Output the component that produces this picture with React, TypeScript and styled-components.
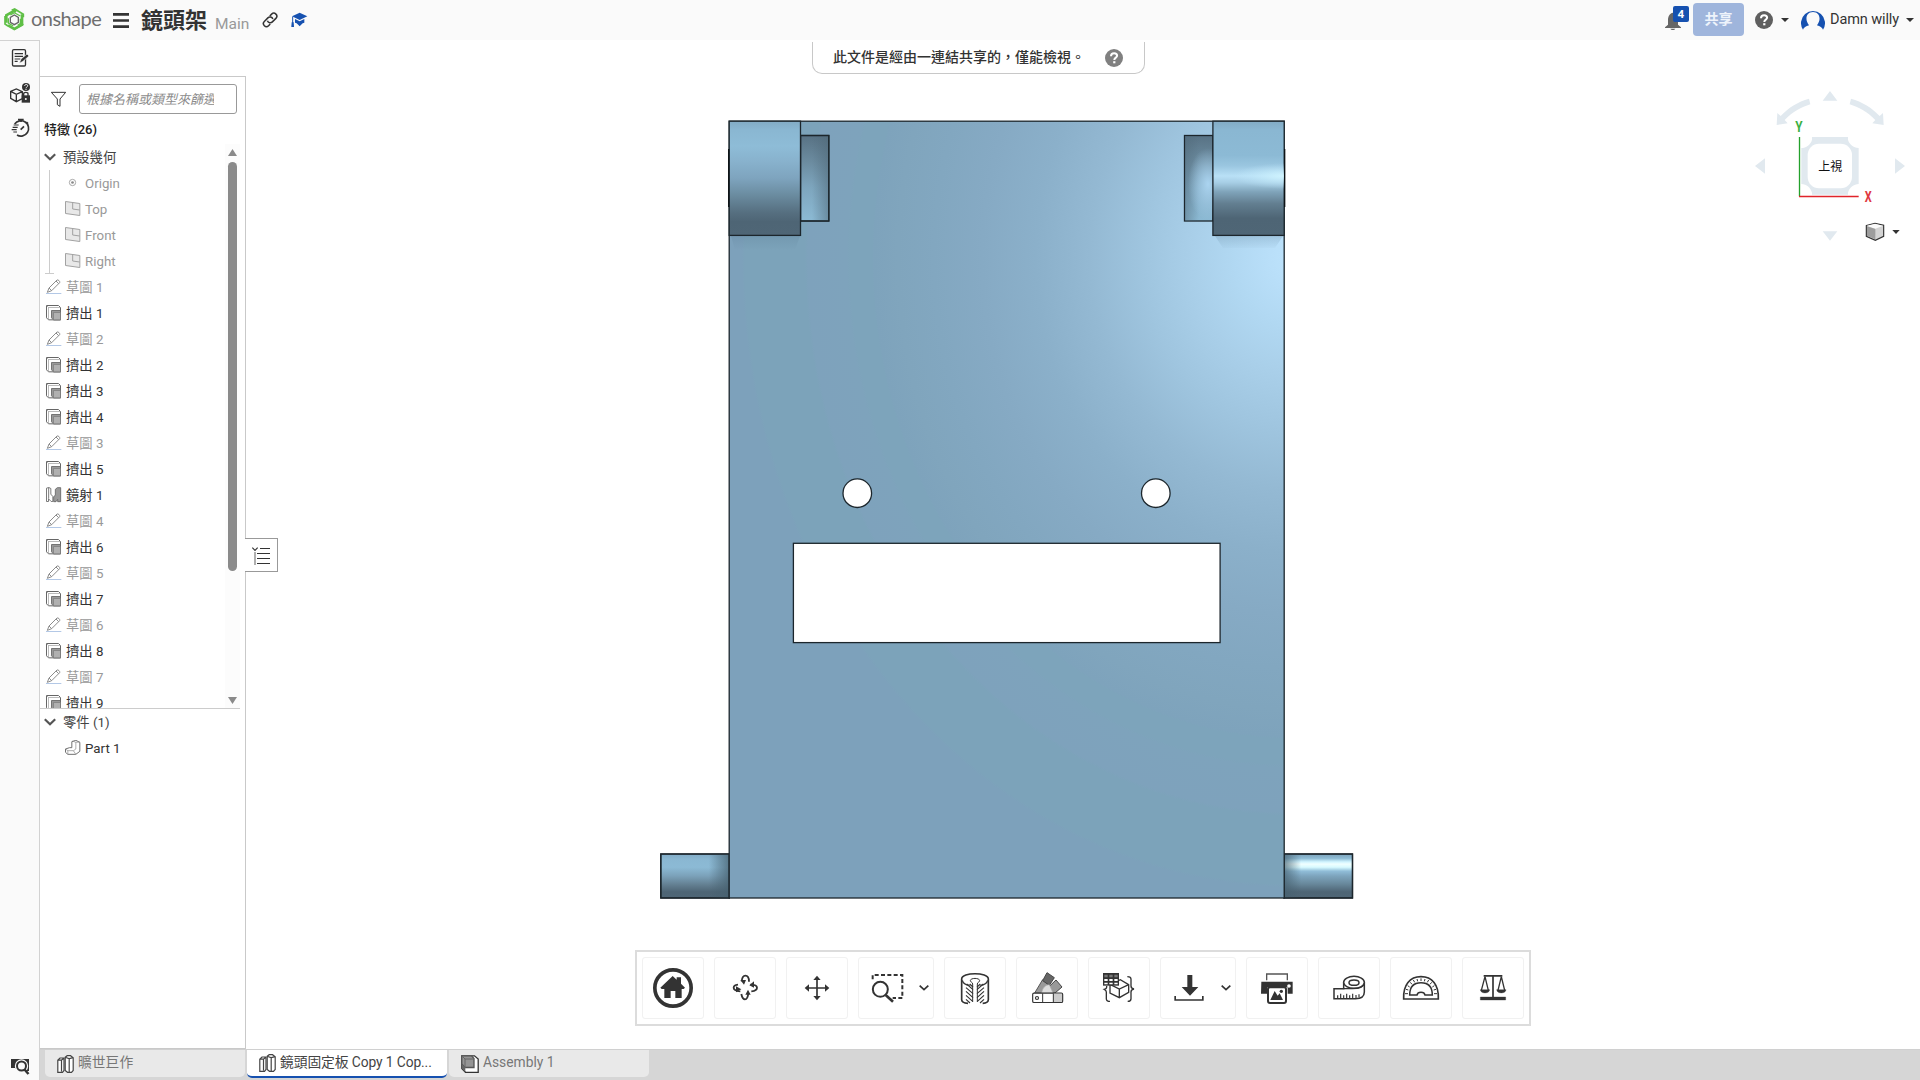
import React from 'react';
import styled, { createGlobalStyle } from 'styled-components';

const Global = createGlobalStyle`
  * { box-sizing: border-box; }
  body {
    margin: 0;
    overflow: hidden;
    background: #fff;
    color: #333;
    font-family: Roboto, "Noto Sans CJK TC", sans-serif;
    font-size: 14px;
  }
  svg { display: block; flex: none; }
`;

const Shell = styled.div`
  display: flex;
  flex-direction: column;
  width: 1920px;
  height: 1080px;
`;

/* ---------- header ---------- */
const Header = styled.header`
  display: flex;
  align-items: center;
  height: 40px;
  flex: none;
  padding: 0 6px 0 4px;
  background: #fafafa;
`;
const Brand = styled.span`
  width: 68px;
  margin: -5px 14px 0 6px;
  font: 400 20px/40px Lato, sans-serif;
  letter-spacing: -0.55px;
  color: #6e6e6e;
  white-space: nowrap;
`;
const Title = styled.h1`
  margin: 2px 8px 0 12px;
  width: 66px;
  font-size: 22px;
  line-height: 38px;
  font-weight: 700;
  white-space: nowrap;
`;
const Workspace = styled.span`
  width: 34px;
  padding-top: 8px;
  margin-right: 13px;
  font-size: 15.5px;
  line-height: 32px;
  color: #999;
`;
const Spacer = styled.div`
  flex: 1;
`;
const Bell = styled.div`
  position: relative;
  width: 28px;
  height: 40px;
`;
const Badge = styled.span`
  position: absolute;
  left: 8px;
  top: 6px;
  width: 16px;
  height: 16px;
  border-radius: 2px;
  background: #1651b0;
  color: #fff;
  font: 700 11px/15px "Open Sans", sans-serif;
  text-align: center;
`;
const Share = styled.button`
  width: 51px;
  height: 33px;
  margin: -1px 11px 0 0;
  padding: 0;
  border: 0;
  border-radius: 4px;
  background: #9fb5dc;
  color: #eef3fb;
  font: 700 14px/33px Roboto, "Noto Sans CJK TC", sans-serif;
`;
const UserName = styled.span`
  width: 69px;
  margin: 0 7px 0 5px;
  font-size: 14.5px;
  line-height: 40px;
  letter-spacing: -0.1px;
  white-space: nowrap;
`;
const Caret = styled.i<{ $before?: number; $after?: number }>`
  width: 0;
  height: 0;
  margin: 0 ${(p) => p.$after ?? 0}px 0 ${(p) => p.$before ?? 0}px;
  border: 4px solid transparent;
  border-top-color: #333;
  border-bottom: 0;
`;

/* ---------- body ---------- */
const Body = styled.div`
  display: flex;
  flex: 1;
  min-height: 0;
`;
const Rail = styled.nav`
  display: flex;
  flex-direction: column;
  width: 40px;
  border-top: 1px solid #d2d2d2;
  border-right: 1px solid #d2d2d2;
  background: #fafafa;
`;
const Main = styled.main`
  display: flex;
  flex-direction: column;
  flex: 1;
  min-width: 0;
`;
const Workarea = styled.div`
  position: relative;
  display: flex;
  height: 1009px;
`;
const Panel = styled.aside`
  display: flex;
  flex-direction: column;
  width: 206px;
  margin-top: 36px;
  border: 1px solid #c9c9c9;
  border-left: 0;
`;
const FilterRow = styled.div`
  display: flex;
  align-items: center;
  gap: 12px;
  padding: 7px 0 0 11px;
`;
const FilterInput = styled.input`
  width: 158px;
  height: 30px;
  padding: 0 22px 0 6px;
  border: 1px solid #999;
  border-radius: 3px;
  outline: 0;
  background: #fff;
  font: 13px Roboto, "Noto Sans CJK TC", sans-serif;
  &::placeholder {
    color: #8c8c8c;
    font-style: italic;
  }
`;
const ListTitle = styled.div`
  height: 30px;
  padding-left: 4px;
  font-size: 13px;
  font-weight: 500;
  line-height: 32px;
  color: #222;
`;
const ListArea = styled.div`
  display: flex;
  width: 200px;
  height: 565px;
  border-bottom: 1px solid #ccc;
`;
const Rows = styled.div`
  flex: 1;
  overflow: hidden;
`;
const Row = styled.div<{ $indent?: number; $dim?: boolean }>`
  display: flex;
  align-items: center;
  gap: 4px;
  height: 26px;
  padding: 2px 0 0 ${(p) => p.$indent ?? 6}px;
  font-size: 13.3px;
  line-height: 24px;
  color: ${(p) => (p.$dim ? '#999' : '#333')};
  white-space: nowrap;
  svg {
    margin-top: -2px;
  }
`;
const GroupRow = styled(Row)`
  gap: 7px;
  padding-left: 4px;
  color: #444;
`;
const Branch = styled.div`
  position: relative;
  &::before,
  &::after {
    content: '';
    position: absolute;
    background: #ccc;
  }
  &::before {
    left: 9px;
    top: 0;
    width: 1px;
    bottom: 0;
  }
  &::after {
    left: 5px;
    bottom: 0;
    width: 9px;
    height: 1px;
  }
`;
const Scrollbar = styled.div`
  display: flex;
  flex-direction: column;
  align-items: center;
  width: 15px;
  padding: 5px 0 4px;
  background: #fcfcfc;
`;
const Arrow = styled.i<{ $down?: boolean }>`
  width: 9px;
  height: 7px;
  background: #8a8a8a;
  clip-path: ${(p) => (p.$down ? 'polygon(0 0, 100% 0, 50% 100%)' : 'polygon(50% 0, 100% 100%, 0 100%)')};
`;
const Thumb = styled.div`
  width: 9px;
  height: 409px;
  margin: 6px 0 auto;
  border-radius: 5px;
  background: #8a8a8a;
`;
const PanelToggle = styled.button`
  position: absolute;
  left: 205px;
  top: 498px;
  width: 33px;
  height: 34px;
  padding: 0;
  border: 1px solid #999;
  border-left: 0;
  background: #fff;
`;
const Banner = styled.div`
  position: absolute;
  left: 772px;
  top: 2px;
  display: flex;
  align-items: center;
  gap: 20px;
  width: 333px;
  height: 32px;
  padding-left: 20px;
  border: 1px solid #c8c8c8;
  border-top: 0;
  border-radius: 0 0 10px 10px;
  background: #fff;
  font-weight: 500;
  line-height: 28px;
  white-space: nowrap;
`;
const BannerText = styled.span`
  margin-top: -2px;
`;
const Toolbar = styled.div`
  position: absolute;
  left: 595px;
  top: 910px;
  display: flex;
  gap: 10px;
  padding: 5px;
  border: 2px solid #dcdcdc;
  background: #fff;
`;
const ToolButton = styled.button<{ $wide?: boolean }>`
  width: ${(p) => (p.$wide ? 76 : 62)}px;
  height: 62px;
  padding: 0;
  border: 1px solid #f1f1f1;
  border-radius: 3px;
  background: #fff;
`;

/* ---------- tabs ---------- */
const Tabs = styled.footer`
  display: flex;
  gap: 2px;
  flex: 1;
  padding-left: 5px;
  border-top: 1px solid #d0d0d0;
  background: #d6d6d6;
`;
const Tab = styled.div<{ $active?: boolean }>`
  display: flex;
  align-items: center;
  gap: 4px;
  width: 200px;
  height: ${(p) => (p.$active ? 28 : 27)}px;
  padding-left: 12px;
  border-bottom: ${(p) => (p.$active ? '2px solid #1651b0' : '0')};
  border-radius: 0 0 5px 5px;
  background: ${(p) => (p.$active ? '#fff' : '#e9e9e9')};
  color: ${(p) => (p.$active ? '#444' : '#777')};
  font-size: 13.8px;
  letter-spacing: ${(p) => (p.$active ? '-0.1px' : '0')};
  line-height: 25px;
  white-space: nowrap;
`;
const TabLabel = styled.span`
  margin-top: -2px;
`;

/* ---------- icons ---------- */
type Box = { box: string; w: number; h: number; children: React.ReactNode };
const Glyph = ({ box, w, h, children }: Box) => (
  <svg width={w} height={h} viewBox={box} fill="none" stroke="#333" strokeWidth="4">
    {children}
  </svg>
);

const HelpIcon = ({ size, color }: { size: number; color: string }) => (
  <svg width={size} height={size} viewBox="0 0 18 18" fill="none">
    <circle cx="9" cy="9" r="9" fill={color} />
    <path d="M6 7.2C6 5.3 7.3 4.3 9.1 4.3S12.1 5.3 12.1 6.8C12.1 8.6 9.3 8.7 9.3 10.9" stroke="#fff" strokeWidth="2" />
    <path d="M8.2 12.2h2.2v2.1H8.2z" fill="#fff" />
  </svg>
);

const SketchIcon = () => (
  <Glyph box="138 147 48 48" w={16} h={16}>
    <path d="M138 190.500h46" stroke="#b3c8e6" strokeWidth="3" />
    <path d="M142 187l5-13 24-24c3-2 10 4 8 8l-24 24zM147 174l8 8M168 153l8 8" stroke="#8c8c8c" strokeWidth="3" />
  </Glyph>
);
const ExtrudeIcon = () => (
  <Glyph box="138 225 48 48" w={16} h={16}>
    <path d="M139.500 226.500h36l6 6v37h-36l-6-6z" fill="#fff" stroke="#666" strokeWidth="3" />
    <path d="M145.500 232.500h36M145.500 232.500v37M139.500 226.500l6 6" stroke="#999" strokeWidth="2" />
    <path d="M154.500 241.500h27v28h-21l-6-6z" fill="#999" stroke="#666" strokeWidth="2.600" />
    <path d="M160.500 247.500h21v22h-21z" fill="#b0b0b0" stroke="#777" strokeWidth="2" />
  </Glyph>
);
const MirrorIcon = () => (
  <Glyph box="138 21 48 48" w={16} h={16}>
    <path d="M139.500 24.500l7-2 6 3v17l6 7v15l-5 0-8-8v8h-6zM146 23v33" fill="#fff" stroke="#666" strokeWidth="2.600" />
    <path d="M182 23h-10l-6 5v17l-5 6v14h7l5-7v7h9z" fill="#999" stroke="#666" strokeWidth="2.600" />
  </Glyph>
);
const PlaneIcon = () => (
  <Glyph box="195 603 48 48" w={16} h={16}>
    <path d="M196.500 604.500l43 6v36l-43-6z" fill="#e8e8e8" stroke="#a2a2a2" strokeWidth="3" />
    <path d="M218 608v19l21 3" stroke="#a2a2a2" strokeWidth="3" />
  </Glyph>
);
const OriginIcon = () => (
  <Glyph box="195 525 48 48" w={16} h={16}>
    <circle cx="217.500" cy="547.500" r="9.500" stroke="#999" strokeWidth="2.500" />
    <circle cx="217.500" cy="547.500" r="4" fill="#888" stroke="none" />
  </Glyph>
);
const PartIcon = () => (
  <Glyph box="195 780 48 48" w={16} h={16}>
    <path d="M196.500 807l12-4h7V785l12-4 12 6v27l-12 9h-24l-7-6z" fill="#fff" stroke="#666" strokeWidth="2.800" />
    <path d="M196.500 807l7 5h17l7-5v-20l12-1M203.500 812v10M227.500 787l-10-4M220 812l7 10" stroke="#888" strokeWidth="2" />
  </Glyph>
);
const Chevron = () => (
  <svg width="12" height="8" viewBox="0 0 12 8" fill="none" stroke="#555" strokeWidth="2.200">
    <path d="M.8 1.300L6 6.300l5.200-5" />
  </svg>
);
const StudioIcon = () => (
  <svg width="17" height="18" viewBox="0 0 17 18" fill="#fff" stroke="#444" strokeWidth="1.200">
    <path d="M.8 5.200L3 3h4v12.500L5.500 17.300H.8zM.8 5.200h3.700L6.500 3.500M4.500 5.500v11" />
    <path d="M8.200 2.200L10.200.7h3.300l2.700 2V15.500l-1.700 1.800h-4L8.200 15.500zM8.200 2.200l4 1.500v13M12.200 3.700l4-1" />
  </svg>
);
const AssemblyIcon = () => (
  <svg width="18" height="18" viewBox="0 0 18 18" stroke="#333" strokeWidth="1.300">
    <path d="M.8.8h12.700L17.200 4v13.300H4.500L.8 13.500z" fill="#fff" />
    <path d="M.8.8h9.700L13 3.500v9H4L.8 9z" fill="#959595" stroke="#555" />
    <path d="M.8.8L4 4h9M4 4v9" fill="none" stroke="#666" strokeWidth="1" />
    <path d="M.8 9v4.500L4.300 17v-4.500z" fill="#666" stroke="none" />
  </svg>
);

const dark = '#333';

const tools: { name: string; box: string; wide?: boolean; art: React.ReactNode }[] = [
  {
    name: 'home',
    box: '69 84 180 180',
    art: (
      <>
        <circle cx="159" cy="174" r="54.500" strokeWidth="11" />
        <path d="M121 173l37-35 12 11v-7h13v19l12 12-4 4h-6v27h-19v-21h-14v21h-19v-27h-8z" fill={dark} stroke="none" />
      </>
    ),
  },
  {
    name: 'rotate',
    box: '285 84 180 180',
    art: (
      <>
        <path d="M365 154c1-11 6-17 11-17 7 0 11 8 11 18M391 164c12 0 20 4 20 9s-7 10-17 11M385 189c-1 12-5 19-10 19s-9-6-11-16M361 184c-12-1-20-5-20-11 0-4 5-8 13-9" strokeWidth="5.500" />
        <path d="M361 150h17l-6 14zM388 166l14-12v19zM376 194h16l-8-15zM364 178l-16-9v18z" fill={dark} stroke="none" />
      </>
    ),
  },
  {
    name: 'pan',
    box: '501 84 180 180',
    art: (
      <>
        <path d="M564 174h54M591 147v54" strokeWidth="5" />
        <path d="M591 137l11 13h-22zM591 211l11-13h-22zM554 174l13-11v22zM628 174l-13-11v22z" fill={dark} stroke="none" />
      </>
    ),
  },
  {
    name: 'zoom window',
    box: '717 84 222 180',
    wide: true,
    art: (
      <>
        <path d="M758 148v-13h89v69h-29" strokeDasharray="12 7" strokeWidth="6" />
        <circle cx="781" cy="178" r="22.500" fill="#fff" strokeWidth="6" />
        <path d="M797 195l22 20" strokeWidth="8" />
        <path d="M899 167l13 12 13-12" strokeWidth="5" />
      </>
    ),
  },
  {
    name: 'section view',
    box: '975 84 180 180',
    art: (
      <>
        <path d="M1044 220c-12-1-19-5-19-11v-62c0-21 80-21 80 0v62c0 6-7 10-17 11" strokeWidth="5" />
        <path d="M1027 151c2 9 12 14 22 15M1103 151c-2 8-12 14-22 15" strokeWidth="4" />
        <path d="M1051 152c0-9 28-9 28 0-1 6-7 4-7 10v54M1051 152c1 6 7 4 7 10v54" strokeWidth="3" />
        <path d="M1040 162l19 17M1038 173l21 18M1038 184l21 19M1038 196l20 18M1038 208l12 11M1049 162l10 9M1090 162l-19 17M1092 173l-21 18M1092 184l-21 19M1092 196l-20 18M1092 208l-12 11M1081 162l-10 9" strokeWidth="3.500" />
      </>
    ),
  },
  {
    name: 'appearance',
    box: '1191 84 180 180',
    art: (
      <>
        <path d="M1244 189l24-40 20 14-8 26z" fill="#999" stroke="#555" strokeWidth="3" />
        <path d="M1281 128l22 15-15 23-20-14z" fill="#666" stroke="#444" strokeWidth="3" />
        <path d="M1308 150l18 21-21 18h-13l-5-19z" fill="#999" stroke="#444" strokeWidth="3" />
        <path d="M1265 189c2-16 12-25 23-25l11 25z" fill="#ddd" stroke="#aaa" strokeWidth="2" />
        <rect x="1238" y="189.500" width="90" height="28" rx="4" fill="#fff" strokeWidth="3.500" />
        <path d="M1300 191h26v25h-26z" fill="#ccc" stroke="none" />
        <path d="M1268 190v27M1300 190v27" strokeWidth="3" />
        <circle cx="1251" cy="204" r="4.500" strokeWidth="3.500" />
      </>
    ),
  },
  {
    name: 'configuration',
    box: '27 84 180 180',
    art: (
      <>
        <path d="M90 163l31-14 25 15v23l-28 16-28-14zM90 163l28 14 28-13M118 177v26" fill="#fff" />
        <path d="M69 129h48v38H69z" fill={dark} stroke="none" />
        <path d="M73 134h10v8H73zM88 134h10v8H88zM103 134h10v8h-10z" fill="#777" stroke="none" />
        <path d="M73 147h10v6H73zM88 147h10v6H88zM103 147h10v6h-10zM73 158h10v5H73zM88 158h10v5H88zM103 158h10v5h-10z" fill="#fff" stroke="none" />
        <path d="M80 168v4c0 3-3 5-7 6 4 2 6 4 6 8v20c0 5 4 8 11 8M142 140c8 0 11 3 11 8v20c0 5 3 8 9 9-6 1-9 4-9 9v20c0 5-3 8-10 8" />
      </>
    ),
  },
  {
    name: 'export',
    box: '243 84 222 180',
    wide: true,
    art: (
      <>
        <path d="M322 135h15v36h18l-25 26-25-26h17z" fill={dark} stroke="none" />
        <path d="M285.500 198v12h83v-12" strokeWidth="5" />
        <path d="M425 167l13 12 13-12" strokeWidth="5" />
      </>
    ),
  },
  {
    name: 'print',
    box: '501 84 180 180',
    art: (
      <>
        <path d="M560 151v-19h62v19" stroke="#555" />
        <path d="M544 155h94v36h-15v-19h-61v19h-19z" fill={dark} stroke="none" />
        <circle cx="627" cy="168" r="5.500" fill="#fff" stroke="none" />
        <rect x="564" y="172" width="54" height="47" rx="6" fill="#fff" strokeWidth="6" />
        <path d="M571 210l13-27 9 14 6-7 10 20z" fill={dark} stroke="none" />
        <circle cx="604" cy="184" r="5" fill={dark} stroke="none" />
      </>
    ),
  },
  {
    name: 'measure',
    box: '717 84 180 180',
    art: (
      <>
        <path d="M791 156v20h-29v30h64c18 0 27-8 27-20v-30" fill="#fff" strokeWidth="4.500" />
        <ellipse cx="822" cy="157" rx="31" ry="18" fill="#fff" strokeWidth="4.500" />
        <ellipse cx="822" cy="158" rx="15" ry="8" strokeWidth="4.500" />
        <path d="M791 176h26c17 0 33-4 36-14M773 205v-9M782 205v-14M791 205v-9M800 205v-14M809 205v-9M818 205v-14M828 204v-9M837 202v-9" strokeWidth="3.500" />
      </>
    ),
  },
  {
    name: 'protractor',
    box: '933 84 180 180',
    art: (
      <>
        <path d="M971 207c-2-43 19-67 52-67s54 24 52 67z" strokeWidth="5" />
        <path d="M989 195c0-24 12-37 34-37s34 13 34 37h-22c-2-11-22-11-24 0z" strokeWidth="4.500" />
        <path d="M975 191h9M978 178l7 2M983 167l6 4M991 157l5 6M1000 150l4 7M1011 147l2 7M1023 145v8M1035 147l-2 7M1046 150l-4 7M1055 157l-5 6M1063 167l-6 4M1068 178l-7 2M1071 191h-9" strokeWidth="3" />
      </>
    ),
  },
  {
    name: 'mass properties',
    box: '1149 84 180 180',
    art: (
      <>
        <path d="M1211 137.500h56M1239 137v65" strokeWidth="5" />
        <path d="M1215 140l-11 41M1215 140l10 41M1264 140l-10 41M1264 140l10 41" strokeWidth="4" />
        <path d="M1201 179h28c-1 13-27 13-28 0zM1250 179h28c-1 13-27 13-28 0zM1201 201h76v9h-76z" fill={dark} stroke={dark} strokeWidth="1" />
      </>
    ),
  },
];

/* ---------- features ---------- */
type Kind = 'sketch' | 'extrude' | 'mirror';
const features: [Kind, string][] = [
  ['sketch', '草圖 1'],
  ['extrude', '擠出 1'],
  ['sketch', '草圖 2'],
  ['extrude', '擠出 2'],
  ['extrude', '擠出 3'],
  ['extrude', '擠出 4'],
  ['sketch', '草圖 3'],
  ['extrude', '擠出 5'],
  ['mirror', '鏡射 1'],
  ['sketch', '草圖 4'],
  ['extrude', '擠出 6'],
  ['sketch', '草圖 5'],
  ['extrude', '擠出 7'],
  ['sketch', '草圖 6'],
  ['extrude', '擠出 8'],
  ['sketch', '草圖 7'],
  ['extrude', '擠出 9'],
];
const featureIcon: Record<Kind, React.ReactNode> = {
  sketch: <SketchIcon />,
  extrude: <ExtrudeIcon />,
  mirror: <MirrorIcon />,
};

const Stops = ({ list }: { list: [number, string][] }) => (
  <>
    {list.map(([o, c], i) => (
      <stop key={i} offset={o} stopColor={c} />
    ))}
  </>
);

/* The bracket seen from the top, plus the orientation cube. */
const Scene = () => (
  <svg width="1674" height="1009" viewBox="246 40 1674 1009" fill="none">
    <defs>
      <radialGradient id="plate" gradientUnits="userSpaceOnUse" cx="0" cy="0" r="600" gradientTransform="translate(1294 258) scale(1 1.14)">
        <Stops
          list={[
            [0, '#bde3fc'], [0.04, '#b9dff9'], [0.1, '#b1d8f2'], [0.17, '#a9cfe9'], [0.25, '#9fc5df'],
            [0.34, '#94b9d3'], [0.43, '#8bb0ca'], [0.52, '#86aac4'], [0.6, '#82a7c0'], [0.66, '#80a5bd'],
            [0.7, '#7ea3bc'], [0.703, '#7da4bb'], [0.74, '#7da4bb'], [0.745, '#7ea3bc'],
            [0.81, '#7ea2bc'], [0.815, '#7ca3ba'], [0.915, '#7ca3ba'], [0.92, '#7da1bb'], [1, '#7da1bb'],
          ]}
        />
      </radialGradient>
      <linearGradient id="knuckleL" x2="0" y2="1">
        <Stops list={[[0, '#82abc5'], [0.08, '#8ab7d2'], [0.22, '#8ebcd7'], [0.35, '#88b2cd'], [0.5, '#7ea4be'], [0.65, '#6a8b9f'], [0.8, '#566f80'], [0.88, '#4e6575'], [1, '#4f6676']]} />
      </linearGradient>
      <linearGradient id="knuckleR" x2="0" y2="1">
        <Stops list={[[0, '#82abc5'], [0.08, '#8ab7d2'], [0.3, '#8cbad5'], [0.39, '#9ac6e0'], [0.48, '#b9e0f6'], [0.54, '#a6cde4'], [0.62, '#7fa3b9'], [0.72, '#637f91'], [0.85, '#4e6575'], [1, '#4f6676']]} />
      </linearGradient>
      <radialGradient id="glint" gradientUnits="userSpaceOnUse" cx="0" cy="0" r="1" gradientTransform="translate(1284 176) scale(50 13)">
        <stop offset="0" stopColor="#d2f6ff" stopOpacity=".9" />
        <stop offset="1" stopColor="#c2eafd" stopOpacity="0" />
      </radialGradient>
      <linearGradient id="notch" x2="0" y2="1">
        <Stops list={[[0, '#587284'], [0.3, '#6b8b9f'], [0.6, '#7da5bd'], [1, '#8cbad4']]} />
      </linearGradient>
      <linearGradient id="shadeRight">
        <stop offset=".4" stopColor="#4f6878" stopOpacity="0" />
        <stop offset="1" stopColor="#4f6878" stopOpacity=".55" />
      </linearGradient>
      <linearGradient id="shadeLeft">
        <stop offset="0" stopColor="#4f6878" stopOpacity=".45" />
        <stop offset=".5" stopColor="#4f6878" stopOpacity="0" />
      </linearGradient>
      <radialGradient id="notchGlow" gradientUnits="userSpaceOnUse" cx="0" cy="0" r="1" gradientTransform="translate(1208 184) scale(20 36)">
        <stop offset="0" stopColor="#abd4f0" />
        <stop offset="1" stopColor="#abd4f0" stopOpacity="0" />
      </radialGradient>
      <linearGradient id="pinL" x2="0" y2="1">
        <Stops list={[[0, '#82abc5'], [0.12, '#8ab7d2'], [0.3, '#8cbad5'], [0.5, '#7ba1b9'], [0.7, '#637f91'], [0.86, '#4e6575'], [1, '#4f6676']]} />
      </linearGradient>
      <linearGradient id="pinR" x2="0" y2="1">
        <Stops list={[[0, '#7ba1b9'], [0.1, '#8fbdd6'], [0.18, '#d2f5ff'], [0.23, '#f0ffff'], [0.3, '#d8faff'], [0.39, '#90bdd8'], [0.5, '#7da4bd'], [0.68, '#68889b'], [0.86, '#4e6575'], [1, '#4f6676']]} />
      </linearGradient>
      <linearGradient id="pinShadeL">
        <stop offset=".7" stopColor="#46606f" stopOpacity="0" />
        <stop offset="1" stopColor="#46606f" stopOpacity=".75" />
      </linearGradient>
      <linearGradient id="pinShadeR">
        <stop offset="0" stopColor="#46606f" stopOpacity=".7" />
        <stop offset=".25" stopColor="#46606f" stopOpacity="0" />
      </linearGradient>
      <linearGradient id="drop" x2="0" y2="1">
        <stop offset="0" stopColor="#587a92" stopOpacity=".24" />
        <stop offset="1" stopColor="#587a92" stopOpacity="0" />
      </linearGradient>
    </defs>

    <g stroke="#1c262c" strokeWidth="1.300">
      <rect x="660.800" y="854" width="68.500" height="44" fill="url(#pinL)" />
      <rect x="660.800" y="854" width="68.500" height="44" fill="url(#pinShadeL)" />
      <rect x="1284" y="854" width="68.500" height="44" fill="url(#pinR)" />
      <rect x="1284" y="854" width="68.500" height="44" fill="url(#pinShadeR)" />
      <rect x="729.200" y="121.200" width="555" height="776.800" fill="url(#plate)" />
      <path d="M731 236h69l-5 14h-60zM1215 236h68l-8 12h-52z" fill="url(#drop)" stroke="none" />
      <rect x="800.500" y="135.500" width="28.300" height="85.500" fill="url(#notch)" />
      <rect x="800.500" y="135.500" width="28.300" height="85.500" fill="url(#shadeRight)" />
      <rect x="1184.500" y="135.500" width="28.300" height="85.500" fill="url(#notch)" />
      <rect x="1185" y="136" width="28" height="84.500" fill="url(#shadeLeft)" stroke="none" />
      <rect x="1185" y="136" width="28" height="84.500" fill="url(#notchGlow)" stroke="none" />
      <rect x="729.200" y="121.200" width="71.300" height="114.200" fill="url(#knuckleL)" />
      <rect x="1212.900" y="121.200" width="71.300" height="114.200" fill="url(#knuckleR)" />
      <rect x="1214" y="160" width="70" height="32" fill="url(#glint)" stroke="none" />
      <path d="M728.700 149v58M1284.700 149v58" stroke="#0d1215" />
      <g fill="#fff">
        <circle cx="857.300" cy="493.200" r="14.300" />
        <circle cx="1155.800" cy="493.200" r="14.300" />
        <rect x="793.400" y="543.300" width="426.700" height="99.300" />
      </g>
    </g>

    <g transform="translate(1620 0) scale(.333333)">
      <g fill="#e1e9ef">
        <path d="M630 273l22 29h-44zM630 722l22-28h-44zM405 498l30-23v46zM855 498l-30-23v46z" />
        <path d="M567 296l4 17c-27 9-52 22-77 47l9 10-33 5 2-36 10 9c22-24 52-43 85-52z" />
        <path d="M693 296l-4 17c27 9 52 22 77 47l-9 10 34 5-2-36-10 9c-22-24-53-43-86-52z" />
        <path d="M576 411h108v8c4 14 16 24 32 25v108c-14 0-29 12-32 26v6H576v-6c-4-14-16-26-32-26V444c14 0 29-11 32-25z" />
      </g>
      <rect x="563" y="431" width="133" height="134" rx="34" fill="#fff" />
      <path d="M538.500 411v178" stroke="#24a12c" strokeWidth="4" />
      <path d="M537 589.500h179" stroke="#e0242b" strokeWidth="4" />
      <text x="631" y="513" textAnchor="middle" fontSize="36" fill="#111" fontFamily='"Noto Sans CJK TC", sans-serif'>上視</text>
      <text x="537" y="397" textAnchor="middle" fontSize="42" fontWeight="700" fill="#3bb143" fontFamily="Roboto, sans-serif" textLength="22" lengthAdjust="spacingAndGlyphs">Y</text>
      <text x="745" y="605" textAnchor="middle" fontSize="42" fontWeight="700" fill="#e0393f" fontFamily="Roboto, sans-serif" textLength="21" lengthAdjust="spacingAndGlyphs">X</text>
      <path d="M739 677l26-7 26 6v33l-25 12-27-12z" fill="#d3d3d3" stroke="#333" strokeWidth="3.500" />
      <path d="M740 677l25-6 25 6-24 9z" fill="#fafafa" />
      <path d="M741 679l25 8v31l-25-11z" fill="#9d9d9d" />
      <path d="M817 690h22l-11 12z" fill="#333" />
    </g>
  </svg>
);

export default function App() {
  return (
    <Shell>
      <Global />
      <Header>
        <Glyph box="12 24 63 72" w={21} h={24}>
          <path d="M19 68V46l24-14 6 3M66 43v31L43 87 24 76" stroke="#5fbf46" strokeWidth="8" />
          <path d="M15 48v24l9 6M35 31l9-4 26 16v9M70 72l-27 16" stroke="#5fbf46" strokeWidth="5" />
          <path d="M43 45l12 7v15l-12 7-12-7V52z" stroke="#666" strokeWidth="4" />
          <path d="M31 45l12-7 18 10M61 56v15l-8 5M25 55v14l15 9" stroke="#5fbf46" strokeWidth="4" />
        </Glyph>
        <Brand>onshape</Brand>
        <Glyph box="339 36 48 51" w={16} h={17}>
          <path d="M339 43h48M339 61.500h48M339 80h48" strokeWidth="8" />
        </Glyph>
        <Title>鏡頭架</Title>
        <Workspace>Main</Workspace>
        <Glyph box="786 39 48 48" w={16} h={16}>
          <g transform="rotate(-45 810 63)" strokeWidth="4.500">
            <path d="M806 72h-7a9 9 0 0 1 0-18h15a9 9 0 0 1 8 13" transform="translate(-4 0)" />
            <path d="M814 54h8a9 9 0 0 1 0 18h-15a9 9 0 0 1-8-13" transform="translate(4 0)" />
          </g>
        </Glyph>
        <Glyph box="834 36 93 48" w={31} h={16}>
          <path d="M899 38l23 11-23 11-23-11z" fill="#1651b0" stroke="none" />
          <path d="M885 57l14 7 14-7v11l-5 2-9 9-9-9-5-2z" fill="#1651b0" stroke="none" />
          <path d="M878 50v19" stroke="#1651b0" strokeWidth="3" />
          <path d="M875 67h6l1 14h-8z" fill="#1651b0" stroke="none" />
        </Glyph>
        <Spacer />
        <Bell>
          <Glyph box="135 0 84 120" w={28} h={40}>
            <path d="M159 38c-11 2-15 12-15 22v14l-9 8v2h48v-2l-9-8V60c0-10-4-20-15-22zM151 86h15c-2 5-13 5-15 0z" fill="#666" stroke="none" />
          </Glyph>
          <Badge>4</Badge>
        </Bell>
        <Share>共享</Share>
        <HelpIcon size={18} color="#5f5f5f" />
        <Caret $before={8} $after={12} />
        <Glyph box="543 27 72 72" w={24} h={24}>
          <path d="M549 92a36 36 0 1 1 60 0c-4-9-14-11-18-13 14-18 8-40-12-40s-26 22-12 40c-4 2-14 4-18 13z" fill="#1651b0" stroke="none" />
        </Glyph>
        <UserName>Damn willy</UserName>
        <Caret />
      </Header>
      <Body>
        <Rail>
          <Glyph box="0 123 117 108" w={39} h={36}>
            <rect x="37.500" y="149" width="39" height="49" rx="4" />
            <path d="M44 161h25M44 169h25M44 177h17M44 184h9" strokeWidth="3.500" />
            <path d="M58 190l5-13 18-15 6 6-18 16z" fill={dark} stroke="#fafafa" strokeWidth="2" />
          </Glyph>
          <Glyph box="0 231 117 108" w={39} h={36}>
            <path d="M32 274l17-7 18 8v21l-18 9-17-10zM32 274l17 9 18-8M49 283v22" />
            <circle cx="78" cy="261" r="12" fill={dark} stroke="none" />
            <path d="M74 258c0-6 9-6 9-1 0 4-5 4-5 8M78 267v3" stroke="#fafafa" strokeWidth="3" />
            <path d="M65 286h25v22H65z" fill={dark} stroke="none" />
            <path d="M71 288v-7c0-5 13-5 13 0v7M77 294v6" />
            <circle cx="77.500" cy="297" r="3" fill="#fafafa" stroke="none" />
          </Glyph>
          <Glyph box="0 339 117 108" w={39} h={36}>
            <path d="M44 372a23 23 0 1 1 7 33" strokeWidth="5" />
            <path d="M54 359h17M63 359v7M79 366l5 5" strokeWidth="5" />
            <path d="M41 375h15M38 382h15M35 389h15M40 396h11" strokeWidth="3.500" />
            <path d="M62 389l10-10" strokeWidth="5" />
          </Glyph>
          <Spacer />
          <svg width="39" height="31" viewBox="0 1049 39 31" fill="none">
            <path d="M11 1059h18v12H18l-3-3h-4z" fill={dark} />
            <circle cx="21.500" cy="1066" r="5.200" fill="#fafafa" stroke="#fafafa" strokeWidth="3" />
            <circle cx="21.500" cy="1066" r="4.500" fill="#fafafa" stroke={dark} strokeWidth="2" />
            <path d="M24.500 1069.500l4 4.500" stroke={dark} strokeWidth="2.500" />
          </svg>
        </Rail>
        <Main>
          <Workarea>
            <Panel>
              <FilterRow>
                <Glyph box="153 276 48 48" w={16} h={16}>
                  <path d="M154 280h43l-17 20v22l-8-5v-17z" strokeWidth="3" />
                </Glyph>
                <FilterInput placeholder="根據名稱或類型來篩選" />
              </FilterRow>
              <ListTitle>特徵 (26)</ListTitle>
              <ListArea>
                <Rows>
                  <GroupRow>
                    <Chevron />
                    預設幾何
                  </GroupRow>
                  <Branch>
                    <Row $indent={25} $dim>
                      <OriginIcon />
                      Origin
                    </Row>
                    {['Top', 'Front', 'Right'].map((n) => (
                      <Row key={n} $indent={25} $dim>
                        <PlaneIcon />
                        {n}
                      </Row>
                    ))}
                  </Branch>
                  {features.map(([kind, label]) => (
                    <Row key={label} $dim={kind === 'sketch'}>
                      {featureIcon[kind]}
                      {label}
                    </Row>
                  ))}
                </Rows>
                <Scrollbar>
                  <Arrow />
                  <Thumb />
                  <Arrow $down />
                </Scrollbar>
              </ListArea>
              <GroupRow>
                <Chevron />
                零件 (1)
              </GroupRow>
              <Row $indent={25}>
                <PartIcon />
                Part 1
              </Row>
            </Panel>
            <Scene />
            <PanelToggle aria-label="feature list">
              <Glyph box="735 177 96 96" w={32} h={32}>
                <path d="M757 203l8 8 8-8" strokeWidth="3.500" />
                <path d="M765 216v39" stroke="#888" />
                <path d="M780 205.500h30M771 220.500h39M771 235.500h39M771 250.500h39" strokeWidth="3" />
              </Glyph>
            </PanelToggle>
            <Banner>
              <BannerText>此文件是經由一連結共享的，僅能檢視。</BannerText>
              <HelpIcon size={18} color="#808080" />
            </Banner>
            <Toolbar>
              {tools.map((t) => (
                <ToolButton key={t.name} $wide={t.wide} aria-label={t.name}>
                  <Glyph box={t.box} w={t.wide ? 74 : 60} h={60}>
                    {t.art}
                  </Glyph>
                </ToolButton>
              ))}
            </Toolbar>
          </Workarea>
          <Tabs>
            <Tab>
              <StudioIcon />
              <TabLabel>曠世巨作</TabLabel>
            </Tab>
            <Tab $active>
              <StudioIcon />
              <TabLabel>鏡頭固定板 Copy 1 Cop...</TabLabel>
            </Tab>
            <Tab>
              <AssemblyIcon />
              <TabLabel>Assembly 1</TabLabel>
            </Tab>
          </Tabs>
        </Main>
      </Body>
    </Shell>
  );
}
